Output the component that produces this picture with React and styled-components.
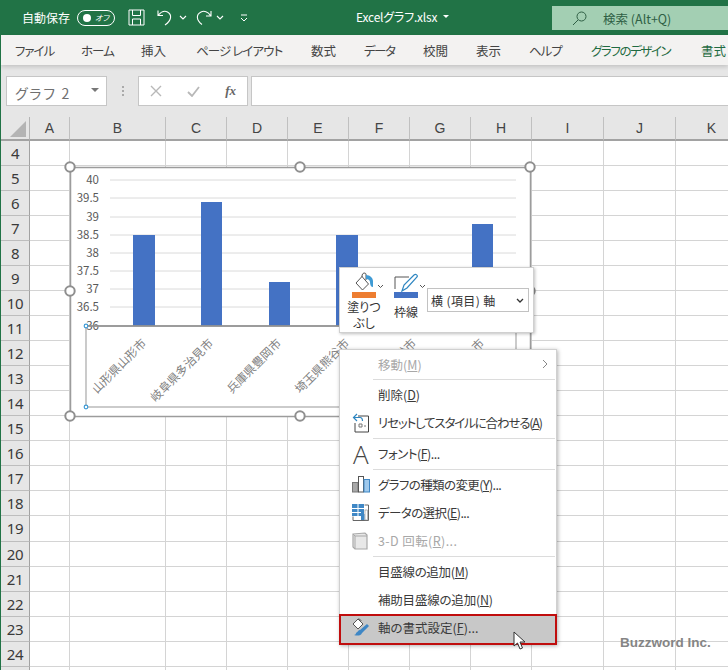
import styled, { createGlobalStyle } from "styled-components";

const GlobalStyle = createGlobalStyle`
  html, body { margin: 0; padding: 0; background: #fff; }
  body { font-family: "Noto Sans CJK JP", "Noto Sans", sans-serif; }
`;

const Page = styled.div`
  position: relative;
  width: 728px;
  height: 670px;
  overflow: hidden;
  display: flex;
  flex-direction: column;
  box-sizing: border-box;
  border-left: 1px solid #217346;
  font-feature-settings: "palt";
`;

const TitleBar = styled.div`
  height: 35px;
  flex: none;
  margin-left: -1px;
  background: #217346;
  color: #fff;
  display: flex;
  align-items: center;
  font-size: 12px;
  position: relative;
`;

const AutoSave = styled.span`
  margin-left: 22px;
  width: 55px;
`;

const Toggle = styled.div`
  height: 14px;
  border: 1px solid #fff;
  border-radius: 8px;
  display: flex;
  align-items: center;
  justify-content: space-between;
  padding: 0 5px;
  width: 26px;
  font-size: 8px;
  font-style: italic;
  &::before {
    content: "";
    width: 8px;
    height: 8px;
    border-radius: 50%;
    background: #fff;
  }
`;

const QatIcon = styled.svg`
  flex: none;
  margin-left: ${(p) => p.$gap}px;
`;

const FileName = styled.div`
  position: absolute;
  left: 356px;
  top: 8px;
  font-size: 12px;
  letter-spacing: -0.2px;
  white-space: nowrap;
  display: flex;
  align-items: center;
  gap: 6px;
  &::after {
    content: "";
    border-left: 3px solid transparent;
    border-right: 3px solid transparent;
    border-top: 3px solid #fff;
  }
`;

const SearchBox = styled.div`
  position: absolute;
  left: 552px;
  top: 6px;
  width: 176px;
  height: 24px;
  background: #a3cfb3;
  color: #2f5f45;
  display: flex;
  align-items: center;
  gap: 16px;
  padding-left: 20px;
  box-sizing: border-box;
  font-size: 12.5px;
`;

const TabBar = styled.div`
  height: 30px;
  flex: none;
  background: #f3f2f1;
  display: flex;
  align-items: center;
  gap: 28px;
  padding-left: 14px;
  font-size: 12.5px;
  white-space: nowrap;
  box-shadow: 0 2px 4px rgba(0, 0, 0, 0.15);
  position: relative;
  z-index: 1;
`;

const Tab = styled.span`
  flex: none;
  width: ${(p) => p.$w}px;
  letter-spacing: ${(p) => p.$track || 0}px;
  color: ${(p) => (p.$accent ? "#1f6b42" : "#444")};
`;

const FormulaBar = styled.div`
  height: 52px;
  flex: none;
  background: #e6e6e6;
  padding: 11px 0 0 5px;
  box-sizing: border-box;
  display: flex;
  align-items: flex-start;
`;

const NameBox = styled.div`
  width: 101px;
  height: 30px;
  box-sizing: border-box;
  background: #fff;
  border: 1px solid #c6c6c6;
  display: flex;
  align-items: center;
  justify-content: space-between;
  padding: 3px 7px 0 8px;
  font-size: 14px;
  letter-spacing: 1.7px;
  color: #707070;
  &::after {
    content: "";
    margin-top: -5px;
    border-left: 4px solid transparent;
    border-right: 4px solid transparent;
    border-top: 4px solid #777;
  }
`;

const Grip = styled.div`
  width: 2px;
  height: 10px;
  margin: 10px 14px 0 15px;
  background: repeating-linear-gradient(#aaa 0 2px, transparent 2px 4px);
`;

const FxBox = styled.div`
  width: 110px;
  height: 30px;
  box-sizing: border-box;
  background: #fff;
  border: 1px solid #c6c6c6;
  display: flex;
  align-items: center;
  justify-content: space-between;
  padding: 0 11px;
`;

const FxLabel = styled.span`
  font-family: "Liberation Serif", serif;
  font-style: italic;
  font-weight: 700;
  font-size: 13px;
  color: #666;
`;

const FormulaInput = styled.div`
  flex: 1;
  height: 30px;
  margin-left: 3px;
  box-sizing: border-box;
  background: #fff;
  border: 1px solid #c6c6c6;
  border-right: 0;
`;

const COLUMNS = [
  ["A", 40],
  ["B", 96],
  ["C", 61],
  ["D", 61],
  ["E", 61],
  ["F", 61],
  ["G", 61],
  ["H", 61],
  ["I", 72],
  ["J", 72],
  ["K", 72],
];

const ROWS = Array.from({ length: 22 }, (_, i) => i + 4);

const Sheet = styled.div`
  display: grid;
  grid-template-columns: 29px ${COLUMNS.map((c) => `${c[1]}px`).join(" ")};
  grid-template-rows: 24px;
  grid-auto-rows: 25.04px;
  background: #fff;
`;

const Corner = styled.div`
  background: #e6e6e6;
  border-right: 1px solid #b4b4b4;
  border-bottom: 2px solid #a2a2a2;
  box-sizing: border-box;
  position: relative;
  &::after {
    content: "";
    position: absolute;
    right: 3px;
    bottom: 2px;
    border-left: 16px solid transparent;
    border-bottom: 16px solid #b4b4b4;
  }
`;

const ColHead = styled.div`
  background: #e6e6e6;
  border-right: 1px solid #c0c0c0;
  border-bottom: 2px solid #a2a2a2;
  box-sizing: border-box;
  display: flex;
  align-items: center;
  justify-content: center;
  font-family: "Liberation Sans", sans-serif;
  font-size: 14px;
  color: #444;
`;

const RowHead = styled.div`
  background: #e6e6e6;
  border-right: 1px solid #a2a2a2;
  border-bottom: 1px solid #bdbdbd;
  box-sizing: border-box;
  display: flex;
  align-items: center;
  justify-content: center;
  font-family: "Noto Sans", sans-serif;
  font-size: 15px;
  letter-spacing: -0.4px;
  color: #3a3a3a;
`;

const Cell = styled.div`
  border-right: 1px solid #d4d4d4;
  border-bottom: 1px solid #d4d4d4;
  box-sizing: border-box;
`;

const ChartSvg = styled.svg`
  position: absolute;
  left: 58px;
  top: 157px;
  font-family: "Noto Sans CJK JP", sans-serif;
`;

const FloatBar = styled.div`
  position: absolute;
  left: 338px;
  top: 267px;
  width: 195px;
  height: 66px;
  box-sizing: border-box;
  background: #fff;
  border: 1px solid #d0d0d0;
  box-shadow: 1px 1px 3px rgba(0, 0, 0, 0.25);
  display: flex;
  align-items: flex-start;
  padding: 4px 0 0 12px;
  color: #333;
  font-size: 12px;
`;

const FloatButton = styled.div`
  width: ${(p) => p.$w}px;
  flex: none;
  display: flex;
  flex-direction: column;
  align-items: flex-start;
  line-height: 16px;
`;

const ColorBar = styled.div`
  width: 24px;
  height: 6px;
  background: ${(p) => p.$color};
`;

const FloatLabel = styled.div`
  width: 24px;
  white-space: nowrap;
  margin-top: ${(p) => p.$top}px;
  display: flex;
  flex-direction: column;
  align-items: center;
`;

const AxisSelect = styled.div`
  width: 102px;
  height: 24px;
  margin-top: 16px;
  box-sizing: border-box;
  border: 1px solid #c2c2c2;
  display: flex;
  align-items: center;
  justify-content: space-between;
  padding: 0 4px 0 3px;
  font-size: 12px;
  letter-spacing: 0.4px;
  color: #333;
`;

const Menu = styled.div`
  position: absolute;
  left: 338px;
  top: 349px;
  width: 218px;
  height: 296px;
  box-sizing: border-box;
  background: #fff;
  border: 1px solid #d0d0d0;
  box-shadow: 1px 1px 4px rgba(0, 0, 0, 0.3);
  font-size: 12.5px;
`;

const MenuItem = styled.div`
  height: ${(p) => (p.$selected ? 31 : 28.2)}px;
  display: flex;
  align-items: center;
  box-sizing: border-box;
  padding: 0 0 ${(p) => (p.$selected ? 4 : 0)}px ${(p) => (p.$selected ? 11 : 12)}px;
  color: ${(p) => (p.$disabled ? "#a8a8a8" : "#3a3a3a")};
  white-space: nowrap;
  position: relative;
  ${(p) =>
    p.$selected &&
    `
    margin: 0 -1px;
    background: #c8c8c8;
    border: 2px solid #c00d0d;
  `}
`;

const ItemText = styled.span`
  letter-spacing: ${(p) => p.$track || 0}px;
`;

const IconSlot = styled.span`
  width: 26px;
  height: 20px;
  flex: none;
  display: flex;
  align-items: center;
`;

const BigA = styled.span`
  font-family: "Open Sans", sans-serif;
  font-weight: 300;
  font-size: 26px;
  line-height: 20px;
  color: #444;
  margin-left: 1px;
`;

const SubArrow = styled.svg`
  position: absolute;
  right: 8px;
  top: 9px;
`;

const Divider = styled.div`
  height: 1px;
  margin: 0.75px 1px 0.75px 33px;
  background: #dcdcdc;
`;

const Cursor = styled.svg`
  position: absolute;
  left: 512px;
  top: 631px;
`;

const Watermark = styled.div`
  position: absolute;
  left: 619px;
  top: 635px;
  font-family: "Liberation Sans", sans-serif;
  font-size: 13.5px;
  font-weight: 700;
  color: #858585;
`;

const Y_LABELS = [
  ["40", 180],
  ["39.5", 198],
  ["39", 217],
  ["38.5", 235],
  ["38", 253],
  ["37.5", 271],
  ["37", 289],
  ["36.5", 307],
];

const BARS = [
  { x: 133, w: 22, top: 235, label: "山形県山形市", end: 147 },
  { x: 201, w: 21, top: 202, label: "岐阜県多治見市", end: 214 },
  { x: 269, w: 21, top: 282, label: "兵庫県豊岡市", end: 282 },
  { x: 336, w: 22, top: 235, label: "埼玉県熊谷市", end: 350 },
  { x: 404, w: 22, top: 290, label: "静岡県浜松市", end: 417 },
  { x: 472, w: 21, top: 224, label: "高知県四万十市", end: 485 },
];

const HANDLES = [
  [70, 167],
  [300, 167],
  [530, 167],
  [70, 291],
  [530, 291],
  [70, 416],
  [300, 416],
  [530, 416],
];

function Chart() {
  return (
    <ChartSvg width="482" height="270" viewBox="59 157 482 270">
      <rect x="70.5" y="167.5" width="460" height="249" fill="#fff" stroke="#9c9c9c" strokeWidth="1.5" />
      {Y_LABELS.map(([t, y]) => (
        <g key={t}>
          <line x1="110" x2="516" y1={y} y2={y} stroke="#dadada" />
          <text x="99" y={y + 4} textAnchor="end" fontSize="11.5" fill="#595959">
            {t}
          </text>
        </g>
      ))}
      {BARS.map((b) => (
        <g key={b.x}>
          <rect x={b.x} y={b.top} width={b.w} height={326 - b.top} fill="#4472c4" />
          <text
            x={b.end}
            y={344}
            textAnchor="end"
            fontSize="11.8"
            fill="#808080"
            transform={`rotate(-45 ${b.end} 344)`}
          >
            {b.label}
          </text>
        </g>
      ))}
      <text x="99" y="330" textAnchor="end" fontSize="11.5" fill="#595959">
        36
      </text>
      <rect x="86" y="326" width="430" height="81" fill="none" stroke="#a8a8a8" strokeWidth="1.2" />
      <line x1="86" x2="516" y1="326" y2="326" stroke="#8c8c8c" strokeWidth="1.4" />
      <circle cx="86" cy="326" r="1.8" fill="#fff" stroke="#3f9bd5" strokeWidth="1.2" />
      <circle cx="86" cy="407" r="1.8" fill="#fff" stroke="#3f9bd5" strokeWidth="1.2" />
      {HANDLES.map(([x, y]) => (
        <circle key={`${x}-${y}`} cx={x} cy={y} r="4.7" fill="#fff" stroke="#8f8f8f" strokeWidth="2" />
      ))}
    </ChartSvg>
  );
}

const Chevron = ({ gap = 0 }) => (
  <QatIcon $gap={gap} width="8" height="5" viewBox="0 0 8 5">
    <path d="M1 1 L4 4 L7 1" fill="none" stroke="#fff" strokeWidth="1.1" />
  </QatIcon>
);

function TitleIcons() {
  return (
    <>
      <QatIcon $gap={13} width="17" height="17" viewBox="0 0 17 17" fill="none" stroke="#fff" strokeWidth="1">
        <path d="M1 1 H16 V16 H1 Z M4.5 1 V6.5 H12.5 V1 M4.5 16 V10 H12.5 V16" />
      </QatIcon>
      <QatIcon $gap={12} width="16" height="17" viewBox="0 0 16 17" fill="none" stroke="#fff" strokeWidth="1.1">
        <path d="M1 1.5 V6.5 H6 M1.5 6 C4 3 7.5 1.5 10.5 3 C15 5.5 15 11 8 16" />
      </QatIcon>
      <Chevron gap={6} />
      <QatIcon $gap={9} width="16" height="17" viewBox="0 0 16 17" fill="none" stroke="#fff" strokeWidth="1.1">
        <path d="M15 2 V7 H10 M14.5 6.5 C12 2.5 8 1.5 5 3 C0 5.5 0 11 6 15.5" />
      </QatIcon>
      <Chevron gap={4} />
      <QatIcon $gap={16} width="8" height="8" viewBox="0 0 8 8" fill="none" stroke="#fff" strokeWidth="1">
        <path d="M1 1 H7 M1 4 L4 7 L7 4" />
      </QatIcon>
    </>
  );
}

const FillIcon = () => (
  <svg width="34" height="20" viewBox="0 0 34 20" fill="none" style={{ display: "block" }}>
    <path d="M4 11 L10 4.5 L16.5 12 L10.5 18 Z" stroke="#555" strokeWidth="1" fill="#fff" />
    <path d="M10 5 C9.5 1 13 0 14 2 L14 8" stroke="#555" strokeWidth="1" />
    <path d="M14 3 C18 3 21 6 21 9 L21 15 C19 15 18 13 18 10 C18 8 16 7 14 7 Z" fill="#3f9bd5" />
    <path d="M26 13 L28.5 15.5 L31 13" stroke="#555" strokeWidth="1" />
  </svg>
);

const PenIcon = () => (
  <svg width="33" height="20" viewBox="0 0 33 20" fill="none" style={{ display: "block" }}>
    <path d="M1 17 V5 H15" stroke="#555" strokeWidth="1" />
    <path d="M8 19 L10 13 L20 3 C22 1.5 24 3.5 23 5 L13 16 Z" stroke="#2e86c1" strokeWidth="1.2" fill="#fff" />
    <path d="M26 13 L28.5 15.5 L31 13" stroke="#555" strokeWidth="1" />
  </svg>
);

const ResetIcon = () => (
  <svg width="18" height="20" viewBox="0 0 18 20" fill="none">
    <path d="M6 3 H16.5 V19 H3 V10" stroke="#444" strokeWidth="1" />
    <path d="M5 1 L1.5 4.5 L5 8 M2 4.5 H8 C10 4.5 10.5 6 10.5 8" stroke="#2e86c1" strokeWidth="1.2" />
    <path d="M7 11 H10 V14 H7 Z M12 13 H14" stroke="#777" strokeWidth="1" />
  </svg>
);

const ChartTypeIcon = () => (
  <svg width="18" height="17" viewBox="0 0 18 17">
    <rect x="0.5" y="6.5" width="5.5" height="9.5" fill="#a8a8a8" stroke="#777" />
    <rect x="6.5" y="0.5" width="5" height="15.5" fill="#fff" stroke="#555" />
    <rect x="12" y="3.5" width="5.5" height="12.5" fill="#9fc9ec" stroke="#3f87c5" />
  </svg>
);

const DataIcon = () => (
  <svg width="17" height="17" viewBox="0 0 17 17">
    <rect x="0" y="0" width="12" height="12" fill="#3f87c5" />
    <path d="M0 4.5 H12 M6 0 V12 M0 8.5 H9" stroke="#fff" strokeWidth="1" />
    <path d="M12.5 1 H16.5 V16.5 H1 V12.5" fill="none" stroke="#666" />
    <rect x="9" y="10" width="3.5" height="6" fill="#3f87c5" />
    <rect x="13" y="6" width="2.5" height="10" fill="#fff" stroke="#888" strokeWidth="0.6" />
  </svg>
);

const RotateIcon = () => (
  <svg width="16" height="18" viewBox="0 0 16 18">
    <path d="M1 2 L13 1 L15 3 V17 L3 17 L1 15 Z" fill="#e8e8e8" stroke="#a8a8a8" strokeWidth="1.2" />
    <path d="M3 4 H15 M3 4 V17 M1 2 L3 4" fill="none" stroke="#a8a8a8" />
  </svg>
);

const FormatIcon = () => (
  <svg width="18" height="19" viewBox="0 0 18 19" fill="none">
    <path d="M1 6 L6 1 L11 6 L6 11 Z" fill="#fff" stroke="#555" />
    <path d="M6 1 C8 1 9 2 9 3" stroke="#555" />
    <path d="M4 15 C6 14 6 12 8 12 L15 6 L17 8 L10 15 C9 18 5 18 2 17 C3 17 4 16 4 15 Z" fill="#3f87c5" />
  </svg>
);

const MENU_ITEMS = [
  { t: "移動", k: "M", disabled: true, arrow: true, divider: true },
  { t: "削除", k: "D" },
  { t: "リセットしてスタイルに合わせる", k: "A", icon: <ResetIcon />, divider: true, track: -1.15 },
  { t: "フォント", k: "F", more: true, icon: <BigA>A</BigA>, divider: true, track: -0.5 },
  { t: "グラフの種類の変更", k: "Y", more: true, icon: <ChartTypeIcon />, track: -0.6 },
  { t: "データの選択", k: "E", more: true, icon: <DataIcon />, track: -0.6 },
  { t: "3-D 回転", k: "R", more: true, disabled: true, icon: <RotateIcon />, divider: true, track: 0.4 },
  { t: "目盛線の追加", k: "M", track: -0.3 },
  { t: "補助目盛線の追加", k: "N", track: -0.2 },
  { t: "軸の書式設定", k: "F", more: true, selected: true, icon: <FormatIcon /> },
];

export default function App() {
  return (
    <Page>
      <GlobalStyle />
      <TitleBar>
        <AutoSave>自動保存</AutoSave>
        <Toggle>オフ</Toggle>
        <TitleIcons />
        <FileName>Excelグラフ.xlsx</FileName>
        <SearchBox>
          <svg width="15" height="15" viewBox="0 0 15 15" fill="none" stroke="#2f5f45" strokeWidth="1">
            <circle cx="9.5" cy="5.5" r="4.5" />
            <path d="M6 9 L1 14" />
          </svg>
          <span>検索 (Alt+Q)</span>
        </SearchBox>
      </TitleBar>
      <TabBar>
        <Tab $w={38} $track={-1}>ファイル</Tab>
        <Tab $w={32} $track={-1}>ホーム</Tab>
        <Tab $w={27}>挿入</Tab>
        <Tab $w={87} $track={-0.9}>ページ レイアウト</Tab>
        <Tab $w={25}>数式</Tab>
        <Tab $w={31} $track={-1.5}>データ</Tab>
        <Tab $w={25}>校閲</Tab>
        <Tab $w={25}>表示</Tab>
        <Tab $w={34} $track={-1}>ヘルプ</Tab>
        <Tab $w={82} $accent $track={-1.4}>グラフのデザイン</Tab>
        <Tab $w={26} $accent>書式</Tab>
      </TabBar>
      <FormulaBar>
        <NameBox>グラフ 2</NameBox>
        <Grip />
        <FxBox>
          <svg width="12" height="12" viewBox="0 0 12 12" fill="none" stroke="#b8b8b8" strokeWidth="1.4">
            <path d="M1 1 L11 11 M11 1 L1 11" />
          </svg>
          <svg width="13" height="11" viewBox="0 0 13 11" fill="none" stroke="#b8b8b8" strokeWidth="1.8">
            <path d="M1 6 L5 10 L12 1" />
          </svg>
          <FxLabel>fx</FxLabel>
        </FxBox>
        <FormulaInput />
      </FormulaBar>
      <Sheet>
        <Corner />
        {COLUMNS.map(([name]) => (
          <ColHead key={name}>{name}</ColHead>
        ))}
        {ROWS.map((r) => [
          <RowHead key={r}>{r < 25 ? r : ""}</RowHead>,
          ...COLUMNS.map(([name]) => <Cell key={`${name}${r}`} />),
        ])}
      </Sheet>

      <Chart />

      <FloatBar>
        <FloatButton $w={42}>
          <FillIcon />
          <ColorBar $color="#ed7d31" />
          <FloatLabel $top={1}>
            <span>塗りつ</span>
            <span>ぶし</span>
          </FloatLabel>
        </FloatButton>
        <FloatButton $w={33}>
          <PenIcon />
          <ColorBar $color="#4472c4" />
          <FloatLabel $top={6}>枠線</FloatLabel>
        </FloatButton>
        <AxisSelect>
          <span>横 (項目) 軸</span>
          <svg width="8" height="5" viewBox="0 0 8 5" fill="none" stroke="#333" strokeWidth="1.3">
            <path d="M1 1 L4 4 L7 1" />
          </svg>
        </AxisSelect>
      </FloatBar>

      <Menu>
        {MENU_ITEMS.map((item) => (
          <div key={item.t}>
            <MenuItem $disabled={item.disabled} $selected={item.selected}>
              <IconSlot>{item.icon}</IconSlot>
              <ItemText $track={item.track}>
                {item.t}(<u>{item.k}</u>){item.more ? "..." : ""}
              </ItemText>
              {item.arrow && (
                <SubArrow width="6" height="10" viewBox="0 0 6 10" fill="none" stroke="#888">
                  <path d="M1 1 L5 5 L1 9" />
                </SubArrow>
              )}
            </MenuItem>
            {item.divider && <Divider />}
          </div>
        ))}
      </Menu>

      <Cursor width="13" height="20" viewBox="0 0 13 20">
        <path d="M1 1 V15 L4.5 12 L7 18 L9.5 17 L7 11 H12 Z" fill="#fff" stroke="#333" strokeWidth="1" />
      </Cursor>
      <Watermark>Buzzword Inc.</Watermark>
    </Page>
  );
}
